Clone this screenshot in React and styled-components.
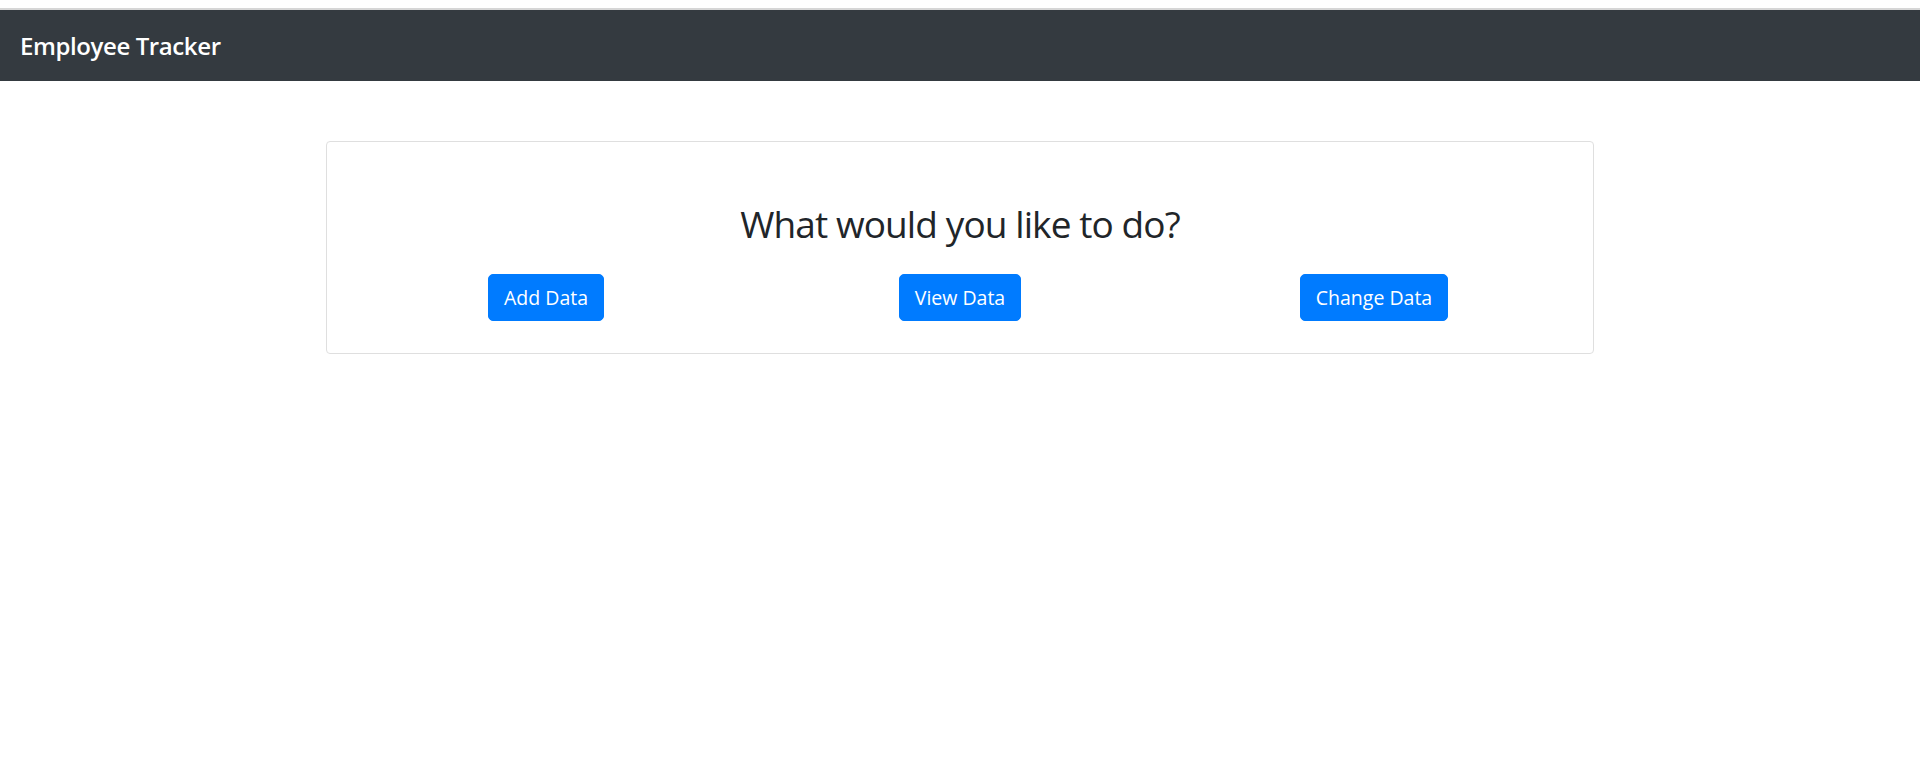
import styled, { createGlobalStyle } from "styled-components";

const GlobalStyle = createGlobalStyle`
  body {
    margin: 0;
    background: #fff;
    font-family: "Open Sans", "Noto Sans", "Liberation Sans", sans-serif;
    color: #212529;
  }
`;

const Page = styled.div`
  padding-top: 8px;
`;

const Navbar = styled.nav`
  border-top: 2px solid #d6d6d6;
  height: 71px;
  background: #343a40;
  display: flex;
  align-items: center;
  padding-left: 20px;
`;

const Brand = styled.span`
  color: #fff;
  font-size: 24px;
  font-weight: 600;
  letter-spacing: -0.4px;
`;

const Main = styled.main`
  display: flex;
  justify-content: center;
  padding-top: 60px;
`;

const Card = styled.div`
  width: 1268px;
  box-sizing: border-box;
  border: 1px solid #dfdfdf;
  border-radius: 4px;
  padding: 60px 12px 32px;
`;

const Title = styled.h1`
  margin: 0 0 28px;
  text-align: center;
  font-size: 37px;
  font-weight: 500;
  line-height: 1.2;
  letter-spacing: -0.9px;
`;

const Row = styled.div`
  display: grid;
  grid-template-columns: repeat(3, 1fr);
`;

const Cell = styled.div`
  display: flex;
  justify-content: center;
`;

const Button = styled.button`
  height: 47px;
  padding: 0 15px;
  border: 1px solid #007bff;
  border-radius: 5px;
  background: #007bff;
  color: #fff;
  font-family: inherit;
  font-size: 19.5px;
  cursor: pointer;
`;

const actions = ["Add Data", "View Data", "Change Data"];

export default function App() {
  return (
    <Page>
      <GlobalStyle />
      <Navbar>
        <Brand>Employee Tracker</Brand>
      </Navbar>
      <Main>
        <Card>
          <Title>What would you like to do?</Title>
          <Row>
            {actions.map((a) => (
              <Cell key={a}>
                <Button>{a}</Button>
              </Cell>
            ))}
          </Row>
        </Card>
      </Main>
    </Page>
  );
}
